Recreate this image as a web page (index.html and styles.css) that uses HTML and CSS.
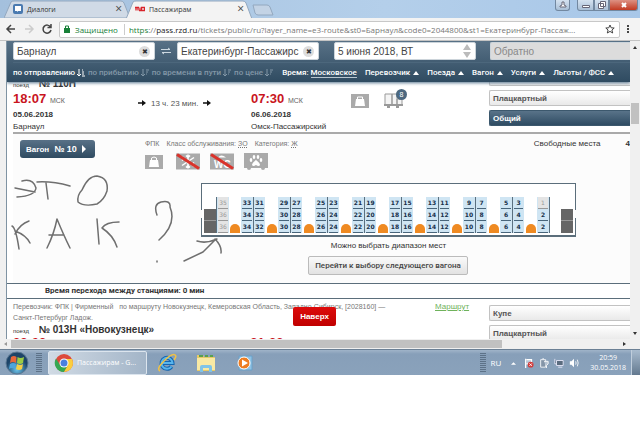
FILE: index.html
```html
<!DOCTYPE html>
<html lang="ru">
<head>
    <meta charset="UTF-8">
    <meta name="viewport" content="width=device-width, initial-scale=1.0">
    <title>Пассажирам</title>
    <link rel="stylesheet" href="styles.css">
</head>
<body>
    <div class="tabs">
        <div class="tab tab-back">
            <svg class="tab-shape" viewBox="0 0 126 18" preserveAspectRatio="none"><path d="M0 18 L7 2 Q8 1 10 1 H117 Q119 1 120 3 L126 18Z" fill="#d0dae6" stroke="#93a8bf"/></svg>
            <svg class="tab-icon" viewBox="0 0 10 10"><rect width="10" height="10" rx="2" fill="#4a7ab0"/><path d="M2 2h6v5H5L4 8V7H2z" fill="#fff"/></svg>
            <span>Диалоги</span>
            <button class="tab-close" aria-label="Закрыть">×</button>
        </div>
        <div class="tab tab-active">
            <svg class="tab-shape" viewBox="0 0 126 18" preserveAspectRatio="none"><path d="M0 19 L7 2 Q8 1 10 1 H117 Q119 1 120 3 L126 19Z" fill="#f3f3f3" stroke="#93a8bf"/></svg>
            <svg class="tab-icon" viewBox="0 0 10 10"><path d="M0 3.500h4M2 3.500v3M0 3.500v3M4 3.500v3M4 6.500h2V3.500M6.500 3.500h3v3h-3z" fill="none" stroke="#d8232a" stroke-width="1.300"/></svg>
            <span>Пассажирам</span>
            <button class="tab-close" aria-label="Закрыть">×</button>
        </div>
        <svg class="new-tab" viewBox="0 0 22 12"><path d="M1 1h14q2 0 3 2l3 8H6q-2 0-3-2z" fill="#c3d3e5" stroke="#93a8bf"/></svg>
        <div class="window-buttons">
            <button class="win user" aria-label="Профиль"><svg viewBox="0 0 12 10"><path d="M3 7V6l2-1V2h2v3l2 1v1z" fill="#fff" stroke="#667"/></svg></button>
            <button class="win minimize" aria-label="Свернуть"><svg viewBox="0 0 12 10"><path d="M2.500 5.500h7v2h-7z" fill="#fff" stroke="#667"/></svg></button>
            <button class="win maximize" aria-label="Развернуть"><svg viewBox="0 0 12 10"><path d="M4.500 1.500h5v5h-5zM2.500 3.500h5v5h-5z" fill="#fff" stroke="#667"/></svg></button>
            <button class="win close" aria-label="Закрыть окно"><svg viewBox="0 0 12 10"><path d="M4 3l4 4M8 3L4 7" stroke="#fff" stroke-width="2"/></svg></button>
        </div>
    </div>

    <div class="toolbar">
        <button class="nav" aria-label="Назад"><svg viewBox="0 0 12 12"><path d="M10 6H2M6 2L2 6l4 4" stroke="#444"/></svg></button>
        <button class="nav" aria-label="Вперёд"><svg viewBox="0 0 12 12"><path d="M2 6h8M6 2l4 4-4 4" stroke="#ccc"/></svg></button>
        <button class="nav" aria-label="Обновить"><svg viewBox="0 0 12 12"><path d="M9.500 4A4 4 0 1 0 10 7M10 1v3.500H6.500" stroke="#444"/></svg></button>
        <div class="address">
            <svg class="lock" viewBox="0 0 6 8"><path d="M0 3h6v5H0z" fill="#188038"/><path d="M1.500 3V1h3v2" fill="none" stroke="#188038"/></svg>
            <span class="secure">Защищено</span>
            <span class="url"><i>https</i>://<b>pass.rzd.ru</b>/tickets/public/ru?layer_name=e3-route&amp;st0=Барнаул&amp;code0=2044800&amp;st1=Екатеринбург-Пассаж...</span>
            <svg class="star" viewBox="0 0 10 10"><path d="M5 1l1.200 2.800 3 .2-2.300 2 .8 3L5 7.400 2.300 9l.8-3-2.300-2 3-.2z" fill="none" stroke="#444"/></svg>
        </div>
        <button class="more" aria-label="Меню"><svg viewBox="0 0 4 10"><path d="M1 1h2v2H1zM1 4h2v2H1zM1 7h2v2H1z" fill="#444"/></svg></button>
    </div>

    <div class="viewport">
        <main class="page">
            <header class="search">
                <div class="fields">
                    <div class="field">
                        <input type="text" value="Барнаул" aria-label="Откуда">
                        <button class="clear" aria-label="Очистить">✖</button>
                    </div>
                    <button class="swap" aria-label="Поменять"><svg viewBox="0 0 12 8"><path d="M1 2.500h9M2 5.500h9M8 1l2 1.500M4 7L2 5.500" stroke="#cdd8e0" fill="none"/></svg></button>
                    <div class="field">
                        <input type="text" value="Екатеринбург-Пассажирс" aria-label="Куда">
                        <button class="clear" aria-label="Очистить">✖</button>
                    </div>
                    <div class="field date">
                        <input type="text" value="5 июня 2018, ВТ" aria-label="Дата">
                        <svg class="spin" viewBox="0 0 8 14"><path d="M0 6l4-6 4 6zM0 8h8l-4 6z" fill="#bbb"/></svg>
                    </div>
                    <div class="field return">
                        <input type="text" value="Обратно" aria-label="Обратно">
                    </div>
                </div>
                <nav class="filters">
                    <a href="#" class="on">по отправлению<svg viewBox="0 0 8 8"><path d="M2 0v7M0 5l2 2 2-2M5 1h1M5 3h2M5 5h2M5 7h3"/></svg></a>
                    <a href="#" class="off">по прибытию<svg viewBox="0 0 8 8"><path d="M2 0v7M0 5l2 2 2-2M5 1h3M5 3h2M5 5h1"/></svg></a>
                    <a href="#" class="off">по времени в пути<svg viewBox="0 0 8 8"><path d="M2 0v7M0 5l2 2 2-2M5 1h3M5 3h2M5 5h1"/></svg></a>
                    <a href="#" class="off">по цене<svg viewBox="0 0 8 8"><path d="M2 0v7M0 5l2 2 2-2M5 1h3M5 3h2M5 5h1"/></svg></a>
                    <span class="time">Время: <a href="#">Московское</a></span>
                    <a href="#" class="drop">Перевозчик</a>
                    <a href="#" class="drop">Поезда</a>
                    <a href="#" class="drop">Вагон</a>
                    <a href="#" class="drop">Услуги</a>
                    <a href="#" class="drop">Льготы / ФСС</a>
                </nav>
            </header>

            <section class="train first-train">
                <div class="route">
                    <div class="number"><small>поезд</small> № 110Н</div>
                    <div class="stops">
                        <div class="stop">
                            <div class="clock">18:07 <small>МСК</small></div>
                            <b>05.06.2018</b>
                            <span>Барнаул</span>
                        </div>
                        <div class="duration">
                            <svg viewBox="0 0 8 6"><path d="M0 3h5" stroke="#111" stroke-width="1.500"/><path d="M4 0l4 3-4 3z" fill="#111"/></svg>
                            13 ч. 23 мин.
                            <svg viewBox="0 0 8 6"><path d="M0 3h5" stroke="#111" stroke-width="1.500"/><path d="M4 0l4 3-4 3z" fill="#111"/></svg>
                        </div>
                        <div class="stop">
                            <div class="clock">07:30 <small>МСК</small></div>
                            <b>06.06.2018</b>
                            <span>Омск-Пассажирский</span>
                        </div>
                        <div class="services">
                            <svg class="bag" viewBox="0 0 18 14"><path d="M0 0h18v14H0z" fill="#aaa"/><path d="M4 12l1-7h8l1 7z" fill="#fff"/><path d="M6.500 5V3h5v2" fill="none" stroke="#fff"/></svg>
                            <div class="wagon">
                                <svg viewBox="0 0 20 16"><path d="M1 1h7v11H1zM8 1h5v11H8zM13 6h5v6h-5z" fill="#f4f4f4" stroke="#999"/><path d="M0 12h19M3 14h3M12 14h3" stroke="#999" stroke-width="2"/></svg>
                                <span class="badge">8</span>
                            </div>
                        </div>
                    </div>
                </div>
                <div class="classes">
                    <button class="class-button" aria-label="Купе"></button>
                    <button class="class-button">Плацкартный</button>
                    <button class="class-button selected">Общий</button>
                </div>
            </section>

            <section class="car">
                <div class="car-head">
                    <button class="car-button">Вагон <b>№ 10</b><svg viewBox="0 0 4 8"><path d="M0 0l4 4-4 4z" fill="#fff"/></svg></button>
                    <div class="car-info">
                        <p><span>ФПК</span><span>Класс обслуживания: <u>ЗО</u></span><span>Категория: <u>Ж</u></span></p>
                        <div class="amenities">
                            <svg class="small" viewBox="0 0 18 14"><path d="M0 0h18v14H0z" fill="#aaa"/><path d="M4 12l1-7h8l1 7z" fill="#fff"/><path d="M6.500 5V3q2.500-2 5 0v2" fill="none" stroke="#fff"/></svg>
                            <svg viewBox="0 0 24 16"><path d="M0 0h24v16H0z" fill="#aaa"/><path d="M12 1v14M6 4l12 8M6 12l12-8M10 2l2 2 2-2M10 14l2-2 2 2M6 7l2-2-2-2M18 9l-2 2 2 2" stroke="#fff" stroke-width="1.500" fill="none"/><path d="M1 1l22 14" stroke="#d9332b" stroke-width="3"/></svg>
                            <svg viewBox="0 0 24 16"><path d="M0 0h24v16H0z" fill="#aaa"/><path d="M8 4q3-4 8 0z" fill="#fff"/><text x="4" y="14" class="wc">WC</text><path d="M1 1l22 14" stroke="#d9332b" stroke-width="3"/></svg>
                            <svg viewBox="0 0 24 17"><path d="M0 0h24v15H0z" fill="#aaa"/><circle cx="5" cy="15" r="2" fill="#aaa"/><circle cx="19" cy="15" r="2" fill="#aaa"/><path d="M8 12q0-2 4-5 4 3 4 5-1 2-4 0-3 2-4 0z" fill="#fff"/><g fill="#fff"><ellipse cx="7" cy="7" rx="1.300" ry="2"/><ellipse cx="10" cy="4" rx="1.300" ry="2"/><ellipse cx="14" cy="4" rx="1.300" ry="2"/><ellipse cx="17" cy="7" rx="1.300" ry="2"/></g></svg>
                        </div>
                    </div>
                    <div class="free">Свободные места <b>4</b></div>
                </div>
                <div class="plan" id="plan"></div>
                <p class="hint">Можно выбрать диапазон мест</p>
                <button class="next">Перейти к выбору следующего вагона</button>
                <svg class="drawing" viewBox="0 0 230 100">
                    <path d="M22 15 Q33 12 36 22 Q35 30 17 31 M15 22 L35 26 M37 16 Q52 15 70 20 M46 17 L48 33 M82 24 Q88 10 97 10 Q109 12 107 25 Q104 34 97 38 Q84 41 78 36 Q77 29 82 24"/>
                    <path d="M12 60 Q16 62 19 83 M15 68 Q20 58 29 55 M15 65 Q26 69 30 77 M47 82 Q54 68 57 53 Q64 70 70 82 M49 69 H64 M97 53 L99 78 M119 56 Q106 56 102 62 Q113 69 117 81"/>
                    <path d="M157 49 Q153 38 161 36 Q171 34 170 41 Q177 58 159 74 M157 95v1"/>
                    <path d="M184 95 L203 86 L216 73 M197 75 Q206 78 217 73 M215 73 Q222 80 221 87"/>
                </svg>
            </section>

            <p class="transfer">Время перехода между станциями: 0 мин</p>

            <section class="train next-train">
                <div class="route">
                    <div class="carrier">
                        <p>Перевозчик: ФПК | Фирменный &nbsp; по маршруту Новокузнецк, Кемеровская Область, Западно-Сибирск, [2028160] — Санкт-Петербург Ладож.</p>
                        <a href="#">Маршрут</a>
                    </div>
                    <div class="number"><small>поезд</small> № 013Н «Новокузнецк»</div>
                    <div class="stops cut">
                        <div class="clock">22:02</div>
                        <div class="clock">21:23</div>
                    </div>
                </div>
                <div class="classes">
                    <button class="class-button">Купе</button>
                    <button class="class-button">Плацкартный</button>
                </div>
            </section>
            <button class="to-top">Наверх</button>
        </main>
        <div class="vscroll"><i class="up"></i><i class="thumb"></i><i class="down"></i></div>
        <div class="hscroll"><i class="left"></i><i class="thumb"></i><i class="right"></i></div>
    </div>

    <footer class="taskbar">
        <button class="start" aria-label="Пуск"><svg viewBox="0 0 24 24"><defs><radialGradient id="orb" cy=".8"><stop offset="0" stop-color="#6cc4ec"/><stop offset="1" stop-color="#1d4468"/></radialGradient></defs><circle cx="12" cy="12" r="11" fill="url(#orb)" stroke="#5c7893"/><path d="M6 6q3-2 5.500 0L11 12q-3-2-6 0z" fill="#e8673a"/><path d="M12.500 6q3 2 6.500 0l-1 6q-3 2-6 0z" fill="#9ccb45"/><path d="M5 13q3-2 6 0l-1 5q-3-2-6 0z" fill="#4fa5dc"/><path d="M12 13q3 2 6 0l-1 5q-3 2-6 0z" fill="#f6cf45"/></svg></button>
        <i class="grip"></i>
        <button class="task">
            <svg viewBox="0 0 20 20"><circle cx="10" cy="10" r="9" fill="#dd4a3c"/><path d="M2 5.500A9 9 0 0 0 10 19l4-7H6z" fill="#35a853"/><path d="M10 19a9 9 0 0 0 8-13h-8l4 6z" fill="#fbce3e"/><circle cx="10" cy="10" r="4.500" fill="#fff"/><circle cx="10" cy="10" r="3.500" fill="#4a80e0"/></svg>
            Пассажирам - G...
        </button>
        <button class="launch" aria-label="Internet Explorer"><svg viewBox="0 0 20 20"><path d="M14.500 13.500A5.500 5.500 0 1 1 15.500 10H5" fill="none" stroke="#1666b0" stroke-width="4"/><path d="M14.500 13.500A5.500 5.500 0 1 1 15.500 10H5" fill="none" stroke="#58b5ec" stroke-width="2"/><path d="M3 18Q-1 16 7 8T18 2q2 1-1 5" fill="none" stroke="#f0c245" stroke-width="1.500"/></svg></button>
        <button class="launch" aria-label="Проводник"><svg viewBox="0 0 20 20"><path d="M1 2h6l1 2h11v14H1z" fill="#e7c967"/><path d="M3 3h4M9 3h3M14 3h3" stroke="#58a050" stroke-width="2"/><path d="M1 5h18v12H1z" fill="#f8e9a4"/><path d="M4 19v-5q0-2 2-2h8q2 0 2 2v5h-3v-4H7v4z" fill="#7fc4e8"/></svg></button>
        <button class="launch" aria-label="Проигрыватель"><svg viewBox="0 0 20 20"><path d="M4 3h13v14H4z" fill="#8ec3e6" stroke="#6aa0c8"/><circle cx="9" cy="10" r="6" fill="#ee7d22" stroke="#fff"/><path d="M7 6.500l6 3.500-6 3.500z" fill="#fff"/></svg></button>
        <div class="tray">
            <i class="grip"></i>
            <span class="lang">RU</span>
            <svg class="arrow" viewBox="0 0 6 4"><path d="M0 4l3-3 3 3z" fill="#fff"/></svg>
            <svg viewBox="0 0 12 12"><path d="M2 1v11M3 2h6v5H3" stroke="#fff" stroke-width="1.500" fill="#bcc9d8"/><circle cx="8" cy="8" r="3.500" fill="#d23c3c"/><path d="M6.500 6.500l3 3M9.500 6.500l-3 3" stroke="#fff"/></svg>
            <svg viewBox="0 0 12 12"><path d="M2 2h6v9H2zM4 1h2" stroke="#fff" fill="#8495a8"/><path d="M6 4h5v3l-2 2v3" stroke="#fff" fill="#b8c4d2"/></svg>
            <svg viewBox="0 0 12 12"><path d="M3 3h8v6H3zM5 11h5M1 1v6h2" stroke="#eef" fill="#5a6b7e"/></svg>
            <svg viewBox="0 0 12 12"><path d="M1 4h2l3-3v10L3 8H1z" fill="#fff"/><path d="M8 4q1 2 0 4M10 2q2 4 0 8" stroke="#fff" fill="none"/></svg>
            <div class="date-time">20:59<br>30.05.2018</div>
            <i class="desktop"></i>
        </div>
    </footer>

    <script>
        const plan = document.getElementById('plan');
        const taken = [35, 36, 1];

        function column(upper) {
            const lower = upper + 1;
            let html = '<div class="column">';
            [upper, lower, lower].forEach(n => {
                html += `<button class="seat${taken.includes(n) ? ' taken' : ''}">${n}</button>`;
            });
            return html + '</div>';
        }

        let html = '<i class="door"></i><div class="bay">' + column(35) + '</div>';
        for (let n = 33; n > 1; n -= 4) {
            html += '<i class="table"></i><div class="bay">' + column(n) + column(n - 2) + '</div>';
        }
        html += '<i class="table"></i><div class="bay last">' + column(1) + '</div><i class="door end"></i>';
        plan.innerHTML = html;
    </script>
</body>
</html>
```
FILE: styles.css
```css
* {
    box-sizing: border-box;
}

body {
    margin: 0;
    background: #fff;
    font-family: "Liberation Sans", Arial, sans-serif;
    font-size: 8px;
    color: #333;
}

button {
    font-family: inherit;
    font-size: inherit;
    padding: 0;
    border: none;
    background: none;
    cursor: pointer;
}

p {
    margin: 0;
}

svg {
    display: block;
    flex: none;
}

/* Browser tabs */
.tabs {
    display: flex;
    height: 18px;
    padding-left: 4px;
    background: linear-gradient(90deg, #a4c0dd, #b4cfea 60%, #a8c7e8);
    font-family: "Open Sans", sans-serif;
    font-size: 7px;
}

.tab {
    position: relative;
    display: flex;
    align-items: center;
    gap: 4px;
    width: 126px;
    padding: 0 8px 0 9px;
    margin-right: -4px;
    color: #333;
}

.tab-active {
    z-index: 1;
}

.tab-shape {
    position: absolute;
    left: 0;
    top: 0;
    width: 100%;
    height: 18px;
}

.tab-icon {
    position: relative;
    width: 10px;
    height: 10px;
}

.tab span {
    position: relative;
    flex: 1;
}

.tab-close {
    position: relative;
    font-size: 12px;
    line-height: 12px;
    color: #444;
}

.new-tab {
    width: 22px;
    height: 12px;
    margin: 4px 0 0 4px;
}

.window-buttons {
    display: flex;
    height: 11px;
    margin-left: auto;
    padding-right: 2px;
}

.win {
    display: flex;
    align-items: center;
    justify-content: center;
    width: 15px;
    background: linear-gradient(#d5e2f0, #a9bfd6);
    border: 1px solid #7288a0;
    border-top: none;
}

.win svg {
    width: 12px;
    height: 10px;
}

.user {
    margin-right: 7px;
    border-radius: 0 0 3px 3px;
}

.minimize {
    width: 17px;
    border-radius: 0 0 0 3px;
}

.close {
    width: 29px;
    background: linear-gradient(#dd9183, #c23a22);
    border-radius: 0 0 3px 0;
}

/* Address bar */
.toolbar {
    display: flex;
    align-items: center;
    gap: 6px;
    height: 23px;
    padding: 0 10px 0 5px;
    background: #f3f3f3;
    border-bottom: 1px solid #c4c4c4;
    font-family: "Open Sans", sans-serif;
}

.nav svg {
    width: 12px;
    height: 12px;
    fill: none;
    stroke-width: 1.5px;
}

.toolbar .nav {
    width: 12px;
}

.address {
    display: flex;
    align-items: center;
    flex: 1;
    min-width: 0;
    height: 17px;
    padding: 0 4px;
    background: #fff;
    border: 1px solid #c8c8c8;
    border-radius: 2px;
}

.lock {
    width: 6px;
    height: 8px;
}

.secure {
    margin-left: 5px;
    padding-right: 6px;
    border-right: 1px solid #ccc;
    line-height: 11px;
    color: #188038;
}

.url {
    flex: 1;
    min-width: 0;
    margin-left: 4px;
    overflow: hidden;
    white-space: nowrap;
    color: #777;
}

.url i {
    font-style: normal;
    color: #188038;
}

.url b {
    font-weight: normal;
    color: #222;
}

.star {
    width: 10px;
    height: 10px;
}

.more svg {
    width: 4px;
    height: 10px;
}

/* Page area with its scroll bars */
.viewport {
    display: grid;
    grid-template-columns: 1fr 10px;
    grid-template-rows: 298px 10px;
    background: #f0f0f0;
}

.page {
    position: relative;
    overflow: hidden;
    margin-left: 6px;
    background: #fff;
    border-left: 1px solid #7f93a3;
}

.search {
    position: relative;
    z-index: 1;
    height: 41px;
    padding-left: 6px;
    background: linear-gradient(#587186, #2f4b61);
    box-shadow: 0 1px 3px #5b7890;
}

.fields {
    display: flex;
    height: 22px;
    padding-top: 1px;
    border-bottom: 1px solid #4c677c;
}

.field {
    display: flex;
    align-items: center;
    width: 142px;
    height: 18px;
    padding: 0 4px 0 3px;
    background: #fff;
    border: 1px solid #ccd4da;
    border-radius: 2px;
}

.field input {
    flex: 1;
    width: 0;
    padding: 0;
    border: none;
    outline: none;
    background: none;
    font-family: inherit;
    font-size: 10px;
    color: #444;
}

.clear {
    width: 11px;
    height: 11px;
    background: #ddd;
    border-radius: 50%;
    font-size: 7px;
    line-height: 11px;
    color: #333;
}

.swap {
    width: 22px;
    height: 17px;
    padding-left: 5px;
}

.swap svg {
    width: 12px;
    height: 8px;
}

.date {
    margin-left: 15px;
}

.spin {
    width: 8px;
    height: 14px;
}

.return {
    flex: 1;
    margin-left: 14px;
    background: #dcdcdc;
    border-right: none;
    border-radius: 2px 0 0 2px;
}

.field.return input {
    color: #888;
}

.filters {
    display: flex;
    align-items: center;
    height: 19px;
    white-space: nowrap;
    font-family: Roboto, sans-serif;
    font-weight: 500;
}

.filters a {
    color: #fff;
    text-decoration: none;
}

.filters .on,
.filters .off {
    display: flex;
    align-items: center;
    gap: 2px;
    margin-right: 3px;
}

.filters .off {
    color: #8297a7;
}

.filters svg {
    width: 8px;
    height: 8px;
    fill: none;
    stroke: currentColor;
}

.time {
    margin-left: 6px;
    color: #fff;
}

.time a {
    border-bottom: 1px solid #b8c5cf;
}

.filters .drop {
    margin-left: 8px;
}

.drop::after {
    content: "";
    display: inline-block;
    margin-left: 3px;
    border: 3px solid transparent;
    border-top: none;
    border-bottom: 4px solid #fff;
}

/* Trains */
.train {
    display: flex;
    margin-left: 6px;
}

.first-train {
    height: 59px;
    margin-top: -7px;
    padding-top: 3px;
    border-bottom: 2px solid #aaa;
}

.route {
    flex: 1;
}

.number {
    font-size: 10px;
    line-height: 12px;
    font-weight: bold;
}

.number small {
    display: inline-block;
    width: 23px;
    font-size: 6px;
    font-weight: normal;
}

.stops {
    display: flex;
}

.stop {
    display: flex;
    flex-direction: column;
    width: 125px;
    font-size: 8px;
    line-height: 12px;
}

.clock {
    font-size: 13px;
    line-height: 16px;
    font-weight: bold;
    color: #c9151e;
}

.clock small {
    font-size: 7px;
    font-weight: normal;
    color: #666;
}

.duration {
    display: flex;
    gap: 5px;
    align-items: center;
    width: 113px;
    height: 24px;
    color: #555;
}

.duration svg {
    width: 8px;
    height: 6px;
}

.services {
    display: flex;
    gap: 15px;
    padding-top: 2px;
    margin-left: -25px;
}

.bag {
    width: 18px;
    height: 14px;
    margin-top: 1px;
}

.wagon {
    position: relative;
    height: 16px;
}

.wagon svg {
    width: 20px;
    height: 16px;
}

.badge {
    position: absolute;
    top: -4px;
    right: -3px;
    width: 11px;
    height: 11px;
    border-radius: 50%;
    background: #4c687f;
    color: #fff;
    font-size: 7px;
    line-height: 11px;
    text-align: center;
}

.classes {
    display: flex;
    flex-direction: column;
    gap: 4px;
    width: 141px;
}

.class-button {
    flex: none;
    height: 16px;
    padding-left: 3px;
    background: linear-gradient(#fff, #e9e9e9);
    border: 1px solid #c2c2c2;
    border-right: none;
    border-radius: 2px 0 0 2px;
    font-weight: bold;
    text-align: left;
    color: #555;
}

.first-train .classes {
    margin-top: -8px;
}

.class-button.selected {
    background: linear-gradient(#597389, #2f4c63);
    border-color: #3c586d;
    color: #fff;
}

/* Car with seat plan */
.car {
    position: relative;
    height: 149px;
    margin-left: 6px;
    background: #fcfcfc;
}

.car-head {
    display: flex;
    height: 49px;
    padding: 6px 0 0 7px;
}

.car-button {
    display: flex;
    align-items: center;
    gap: 5px;
    width: 75px;
    height: 18px;
    padding-left: 6px;
    background: linear-gradient(#587187, #2f4b61);
    border-radius: 3px;
    font-size: 8px;
    font-weight: bold;
    color: #fff;
}

.car-button b {
    font-size: 9px;
}

.car-button svg {
    width: 4px;
    height: 8px;
}

.car-info {
    margin-left: 50px;
    font-size: 7px;
    color: #777;
}

.car-info p {
    display: flex;
    gap: 7px;
    line-height: 8px;
}

.car-info u {
    text-decoration-style: dotted;
}

.amenities {
    display: flex;
    align-items: center;
    gap: 10px;
    margin-top: 5px;
}

.amenities svg {
    width: 24px;
    height: 17px;
}

.amenities .small {
    width: 18px;
    height: 14px;
    margin-right: 3px;
}

.wc {
    font-size: 10px;
    font-weight: bold;
    fill: #fff;
}

.free {
    display: flex;
    gap: 25px;
    margin-left: auto;
    line-height: 8px;
    white-space: nowrap;
}

.plan {
    position: relative;
    display: flex;
    align-items: flex-end;
    width: 375px;
    height: 54px;
    margin-left: 188px;
    padding: 0 2px 2px;
    background: #fff;
    border: 1px solid #5b6e7b;
    border-bottom-width: 2px;
}

/* door openings in the outline */
.plan::before,
.plan::after {
    content: "";
    position: absolute;
    left: -1px;
    top: 26px;
    width: 1px;
    height: 8px;
    background: #fcfcfc;
}

.plan::after {
    left: auto;
    right: -1px;
}

.bay {
    display: flex;
    border-right: 1px solid transparent;
}

.bay:first-of-type {
    border-left: 1px solid #5a7080;
    border-right: none;
}

.bay.last {
    border-right: 1px solid #5a7080;
}

.column + .column {
    border-left: 1px solid #5a7080;
}

.column {
    display: flex;
    flex-direction: column;
    width: 12px;
    padding: 0 1px;
    background: #cfe5f3;
}

.seat {
    height: 12px;
    border-bottom: 1px solid #48657b;
    font-family: "DejaVu Sans", sans-serif;
    font-size: 6px;
    line-height: 11px;
    font-weight: bold;
    color: #17304a;
}

.taken {
    background: #e4e4e4;
    border-color: #999;
    color: #999;
    font-weight: normal;
}

.table {
    flex: none;
    width: 10px;
    height: 9px;
    margin: 0 1px;
    background: #ef8a22;
    border-radius: 5px 5px 0 0;
}

.door {
    width: 12px;
    height: 24px;
    background: linear-gradient(#666 11px, #999 11px, #999 12px, #666 12px);
}

.door.end {
    margin-left: auto;
}

.hint {
    margin-left: 188px;
    width: 375px;
    padding-top: 3px;
    line-height: 11px;
    text-align: center;
}

.next {
    display: block;
    width: 160px;
    height: 19px;
    margin: 5px 0 0 295px;
    background: linear-gradient(#fafafa, #e2e2e2);
    border: 1px solid #bbb;
    border-radius: 2px;
    font-family: Roboto, sans-serif;
    font-weight: 500;
    color: #444;
}

.drawing {
    position: absolute;
    left: -13px;
    top: 32px;
    width: 230px;
    height: 100px;
    fill: none;
    stroke: #6f6f6f;
    stroke-width: 1.5px;
    stroke-linecap: round;
    stroke-linejoin: round;
    pointer-events: none;
}

.transfer {
    height: 16px;
    padding-left: 38px;
    border-top: 1px solid #5b6e7b;
    border-bottom: 1px solid #5b6e7b;
    font-family: Roboto, sans-serif;
    font-weight: bold;
    line-height: 14px;
}

.carrier {
    display: flex;
    height: 22px;
    padding-top: 2px;
    font-size: 7px;
    line-height: 11px;
    color: #777;
}

.carrier p {
    width: 382px;
}

.carrier a {
    margin-left: 40px;
    font-size: 8px;
    color: #6fb25c;
}

.next-train .number {
    padding-top: 2px;
    line-height: 14px;
}

.next-train .classes {
    padding-top: 6px;
}

.cut {
    gap: 204px;
}

.cut .clock {
    line-height: 10px;
}

.to-top {
    position: absolute;
    left: 286px;
    bottom: 13px;
    width: 43px;
    height: 19px;
    background: linear-gradient(#dd0b0b, #c00000);
    border-radius: 2px;
    font-weight: bold;
    color: #fff;
}

/* Scroll bars */
.vscroll,
.hscroll {
    display: flex;
    align-items: center;
}

.vscroll {
    flex-direction: column;
    padding: 5px 0 4px;
}

.hscroll {
    padding: 0 4px;
}

.up,
.down,
.left,
.right {
    border: 2px solid transparent;
}

.up {
    border-top: none;
    border-bottom: 3px solid #333;
}

.down {
    margin-top: auto;
    border-bottom: none;
    border-top: 3px solid #333;
}

.left {
    border-left: none;
    border-right: 3px solid #999;
}

.right {
    margin-left: auto;
    border-right: none;
    border-left: 3px solid #333;
}

.vscroll .thumb {
    width: 8px;
    height: 21px;
    margin-top: 54px;
    background: #c1c1c1;
}

.hscroll .thumb {
    width: 79%;
    height: 8px;
    margin-left: 4px;
    background: #c1c1c1;
}

/* Taskbar */
.taskbar {
    display: flex;
    align-items: center;
    height: 26px;
    padding-left: 5px;
    background: linear-gradient(#a0b4c9, #879fb9 4px, #8aa2bb);
    border-top: 1px solid #6b8095;
    font-family: "Open Sans", sans-serif;
    color: #fff;
}

.start svg {
    width: 24px;
    height: 24px;
}

.grip {
    width: 6px;
    height: 20px;
    background: repeating-linear-gradient(#5d7288 0, #5d7288 1px, transparent 1px, transparent 2px);
}

.start + .grip {
    margin-left: 7px;
}

.task {
    display: flex;
    align-items: center;
    gap: 3px;
    width: 99px;
    height: 24px;
    margin-left: 6px;
    padding-left: 5px;
    background: linear-gradient(90deg, #d0dae4, #a3b5c8);
    border: 1px solid #dce5ee;
    border-radius: 2px;
    font-size: 7px;
    color: #fff;
    white-space: nowrap;
}

.task svg {
    width: 20px;
    height: 20px;
}

.launch {
    margin-left: 19px;
}

.task + .launch {
    margin-left: 10px;
}

.launch svg {
    width: 20px;
    height: 20px;
}

.tray {
    display: flex;
    align-items: center;
    gap: 5px;
    height: 100%;
    margin-left: auto;
}

.tray svg {
    width: 10px;
    height: 10px;
}

.tray .arrow {
    width: 5px;
    height: 4px;
    margin: 0 3px 0 5px;
}

.date-time {
    margin-left: 6px;
    font-size: 7px;
    line-height: 10px;
    text-align: center;
}

.desktop {
    width: 9px;
    height: 100%;
    background: linear-gradient(#a9bccf, #63798f);
    border-left: 1px solid #c0cedc;
}
```
